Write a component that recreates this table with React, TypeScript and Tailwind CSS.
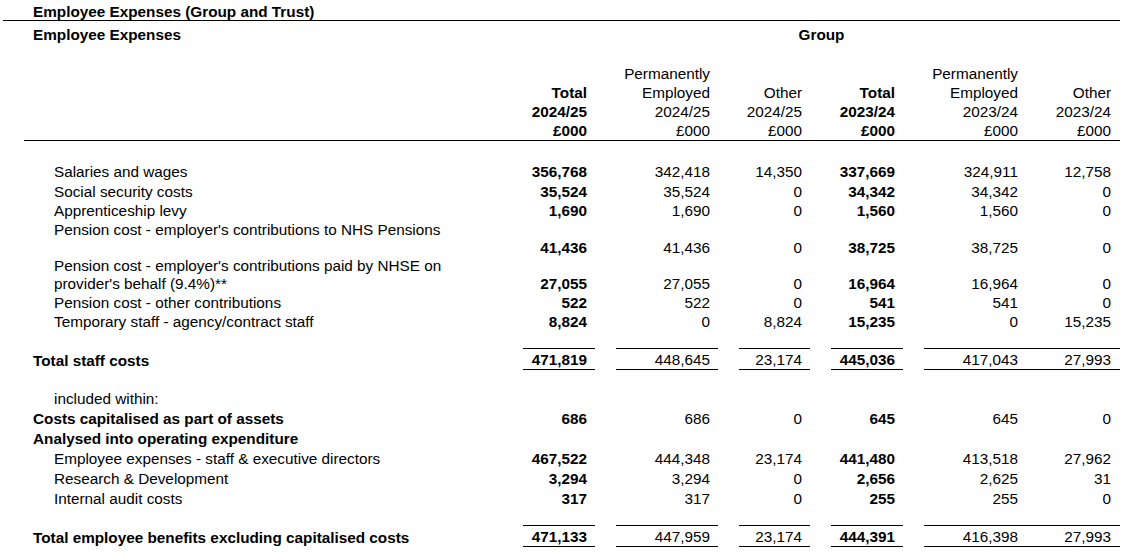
import React from "react";

const COLS = [
  "w-[72px] pr-[8px]",
  "w-[102px] pr-[8px]",
  "w-[71px] pr-[8px]",
  "w-[72px] pr-[8px]",
  "w-[103px] pr-[9px]",
  "w-[72px] pr-[9px]",
];

function Cells({ v, lh = "leading-[19.5px]" }: { v: string[]; lh?: string }) {
  const out: React.ReactNode[] = [];
  v.forEach((t, i) => {
    if (i > 0) out.push(<div key={"g" + i} className="w-[21px] shrink-0" />);
    out.push(
      <div
        key={"c" + i}
        className={`${COLS[i]} shrink-0 text-right self-end whitespace-nowrap ${lh} ${i === 0 || i === 3 ? "font-bold" : ""}`}
      >
        {t}
      </div>
    );
  });
  return <>{out}</>;
}

function TotalCells({ v }: { v: string[] }) {
  const out: React.ReactNode[] = [];
  v.forEach((t, i) => {
    if (i > 0)
      out.push(
        <div
          key={"g" + i}
          className={`w-[21px] shrink-0 h-full ${i === 5 ? "border-y border-black" : ""}`}
        />
      );
    out.push(
      <div
        key={"c" + i}
        className={`${COLS[i]} shrink-0 h-full border-y border-black flex items-end justify-end leading-[16px] whitespace-nowrap ${
          i === 0 || i === 3 ? "font-bold" : ""
        }`}
      >
        <span className="mb-[1px]">{t}</span>
      </div>
    );
  });
  return <>{out}</>;
}

function Row({
  label,
  v,
  bold = false,
  indent = true,
  h = "h-[19.5px]",
  lh = "leading-[19.5px]",
}: {
  label: React.ReactNode;
  v?: string[];
  bold?: boolean;
  indent?: boolean;
  h?: string;
  lh?: string;
}) {
  return (
    <div className={`flex ${h}`}>
      <div
        className={`w-[523px] shrink-0 ${lh} ${indent ? "pl-[54px]" : "pl-[33px]"} ${
          bold ? "font-bold" : ""
        } whitespace-nowrap`}
      >
        {label}
      </div>
      {v && <Cells v={v} lh={lh} />}
    </div>
  );
}

function TotalRow({ label, v }: { label: string; v: string[] }) {
  return (
    <div className="flex h-[22px]">
      <div className="w-[523px] shrink-0 pl-[33px] font-bold flex items-end leading-[16px] whitespace-nowrap">
        <span className="mb-[1px]">{label}</span>
      </div>
      <TotalCells v={v} />
    </div>
  );
}

const HEAD = [
  ["", "Permanently", "", "", "Permanently", ""],
  ["Total", "Employed", "Other", "Total", "Employed", "Other"],
  ["2024/25", "2024/25", "2024/25", "2023/24", "2023/24", "2023/24"],
  ["£000", "£000", "£000", "£000", "£000", "£000"],
];

export default function App() {
  return (
    <div className="w-[1128px] h-[556px] overflow-hidden bg-white text-black text-[15.3px] font-['Liberation_Sans',Arial,sans-serif]">
      {/* Title */}
      <div className="ml-[3px] w-[1117px] h-[21px] border-b border-black pl-[30px] pt-[4px] leading-[16px] font-bold whitespace-nowrap">
        Employee Expenses (Group and Trust)
      </div>
      {/* Section / Group */}
      <div className="flex h-[24px] pt-[4px] leading-[20px] font-bold">
        <div className="w-[523px] pl-[33px]">Employee Expenses</div>
        <div className="w-[597px] text-center">Group</div>
      </div>
      {/* Header */}
      <div className="mt-[19px] ml-[24px] w-[1096px] border-b border-black">
        {HEAD.map((r, i) => (
          <div key={i} className="flex h-[19px]">
            <div className="w-[499px] shrink-0" />
            <Cells v={r} lh="leading-[19px]" />
          </div>
        ))}
      </div>
      {/* Data */}
      <div className="mt-[21px] flex flex-col">
        <Row label="Salaries and wages" v={["356,768", "342,418", "14,350", "337,669", "324,911", "12,758"]} />
        <Row label="Social security costs" v={["35,524", "35,524", "0", "34,342", "34,342", "0"]} />
        <Row label="Apprenticeship levy" v={["1,690", "1,690", "0", "1,560", "1,560", "0"]} />
        <div className="flex h-[36px]">
          <div className="w-[523px] shrink-0 pl-[54px] leading-[18px] whitespace-nowrap">
            Pension cost - employer's contributions to NHS Pensions
          </div>
          <Cells v={["41,436", "41,436", "0", "38,725", "38,725", "0"]} lh="leading-[19px]" />
        </div>
        <div className="flex h-[36px]">
          <div className="w-[523px] shrink-0 pl-[54px] leading-[18px] whitespace-nowrap">
            Pension cost - employer's contributions paid by NHSE on
            <br />
            provider's behalf (9.4%)**
          </div>
          <Cells v={["27,055", "27,055", "0", "16,964", "16,964", "0"]} lh="leading-[18px]" />
        </div>
        <Row label="Pension cost - other contributions" v={["522", "522", "0", "541", "541", "0"]} h="h-[19px]" lh="leading-[19px]" />
        <Row label="Temporary staff - agency/contract staff" v={["8,824", "0", "8,824", "15,235", "0", "15,235"]} />
      </div>
      <div className="mt-[17px]">
        <TotalRow label="Total staff costs" v={["471,819", "448,645", "23,174", "445,036", "417,043", "27,993"]} />
      </div>
      <div className="mt-[18.5px] flex flex-col">
        <Row label="included within:" h="h-[20px]" lh="leading-[20px]" />
        <Row label="Costs capitalised as part of assets" bold indent={false} v={["686", "686", "0", "645", "645", "0"]} h="h-[20px]" lh="leading-[20px]" />
        <Row label="Analysed into operating expenditure" bold indent={false} h="h-[20px]" lh="leading-[20px]" />
        <Row label="Employee expenses - staff & executive directors" v={["467,522", "444,348", "23,174", "441,480", "413,518", "27,962"]} h="h-[20px]" lh="leading-[20px]" />
        <Row label="Research & Development" v={["3,294", "3,294", "0", "2,656", "2,625", "31"]} h="h-[20px]" lh="leading-[20px]" />
        <Row label="Internal audit costs" v={["317", "317", "0", "255", "255", "0"]} h="h-[20px]" lh="leading-[20px]" />
      </div>
      <div className="mt-[16.5px]">
        <TotalRow label="Total employee benefits excluding capitalised costs" v={["471,133", "447,959", "23,174", "444,391", "416,398", "27,993"]} />
      </div>
    </div>
  );
}
